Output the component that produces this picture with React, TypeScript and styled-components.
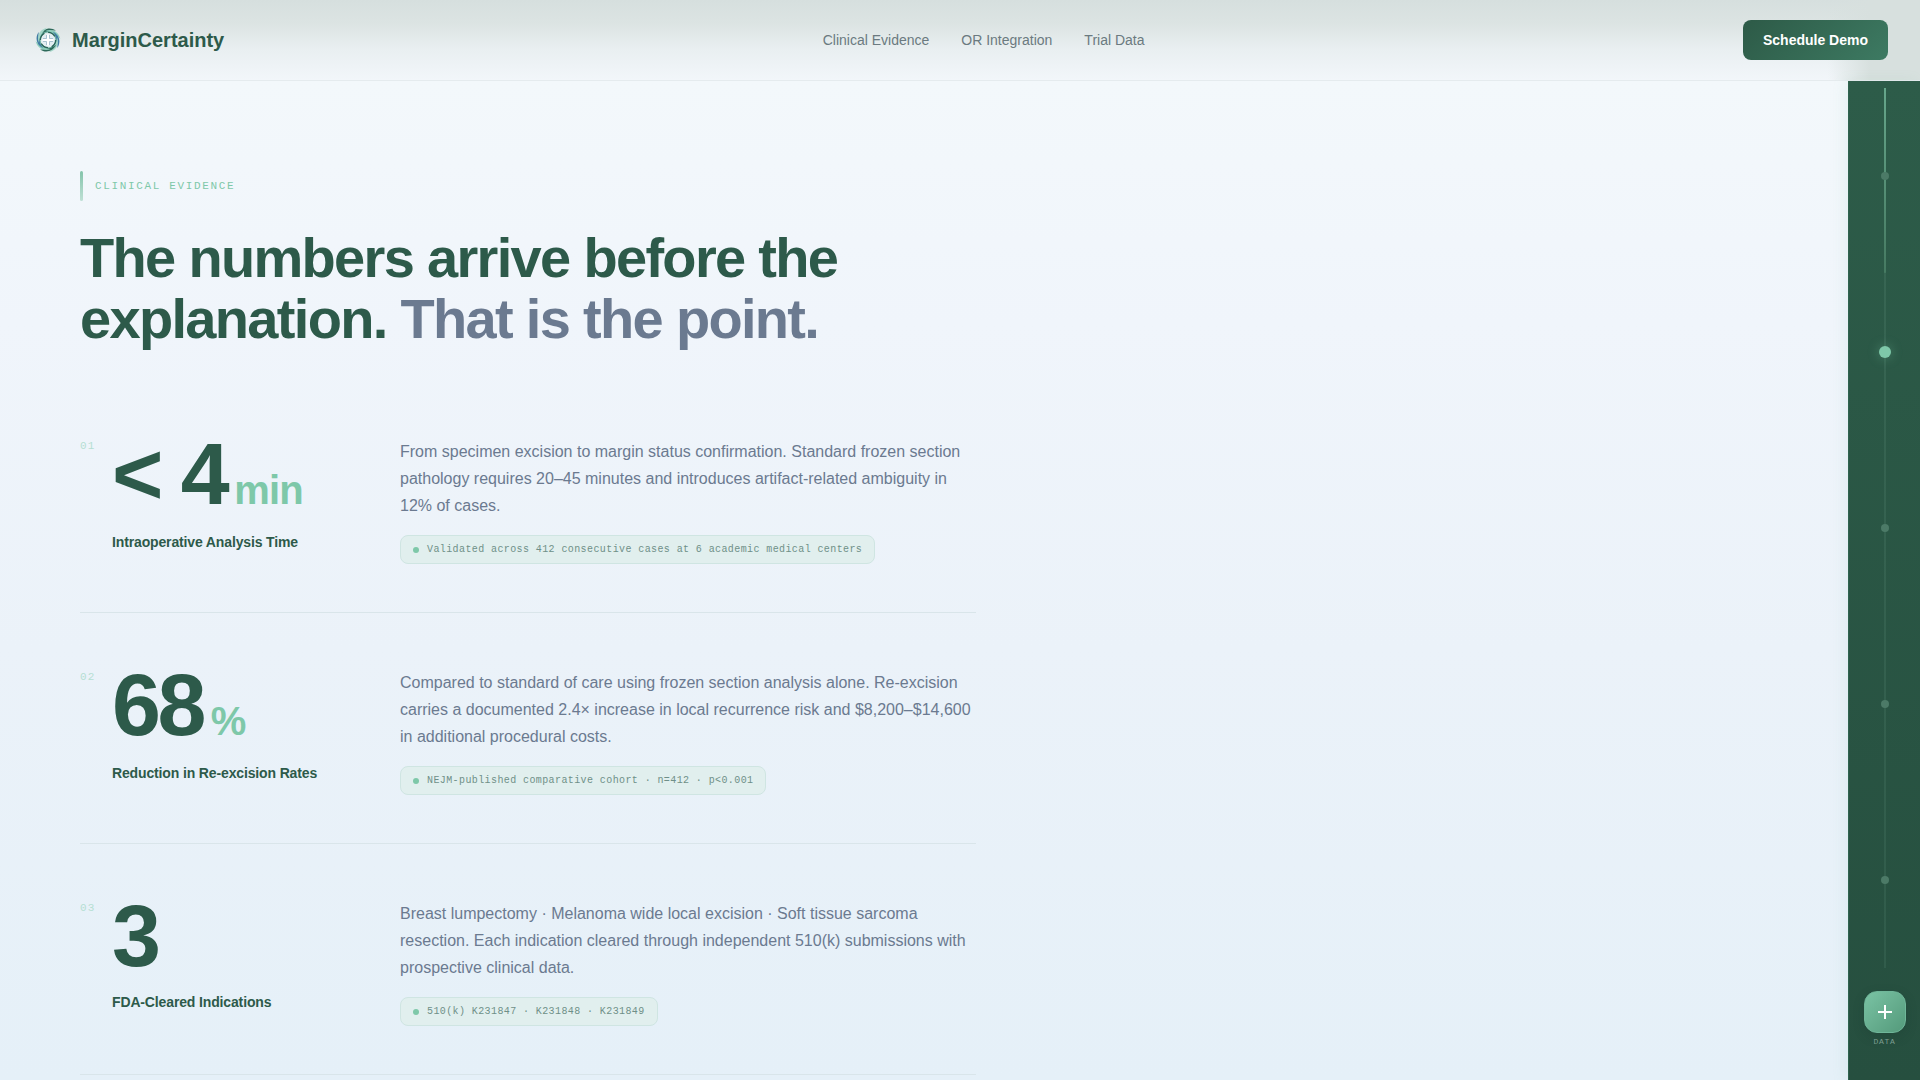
import React from "react";
import styled, { createGlobalStyle } from "styled-components";

const SANS = '"Liberation Sans", Arial, sans-serif';
const MONO = '"Liberation Mono", "Courier New", monospace';
const GREEN = "#2d5a4a";
const MINT = "#7ec8a9";
const SLATE = "#6b7a90";

const GlobalStyle = createGlobalStyle`
  *, *::before, *::after { box-sizing: border-box; }
  html, body, #root { height: 100%; }
  body {
    margin: 0;
    overflow: hidden;
    font-family: ${SANS};
    color: ${GREEN};
    background: #f0f5fb;
  }
  h1, h2, h3, p, ol { margin: 0; padding: 0; }
`;

const Page = styled.div`
  display: flex;
  flex-direction: column;
  height: 100vh;
  overflow: hidden;
  background: linear-gradient(180deg, #f4f9fb 0%, #f0f5fb 30%, #ebf2f9 60%, #e5f0f8 100%);
`;

const Header = styled.header`
  display: flex;
  flex: none;
  align-items: center;
  justify-content: space-between;
  padding: 20px 32px;
  border-bottom: 1px solid #e5ebee;
  background:
    linear-gradient(90deg, transparent calc(100% - 92px), #d7e0de calc(100% - 50px)),
    linear-gradient(180deg, #d6dfde 0%, #dce4e3 30%, #e9eff1 62%, #f2f6fa 100%);
`;

const Brand = styled.a`
  display: flex;
  align-items: center;
  gap: 8px;
  color: ${GREEN};
  font-size: 20px;
  font-weight: 700;
  text-decoration: none;
`;

const Nav = styled.nav`
  display: flex;
  gap: 32px;
`;

const NavLink = styled.a`
  color: #6b7a80;
  font-size: 14px;
  text-decoration: none;
`;

const DemoButton = styled.button`
  height: 40px;
  padding: 0 20px;
  border: 0;
  border-radius: 8px;
  background: linear-gradient(135deg, #2d5a47, #3d7a62);
  color: #fff;
  font: 700 14px ${SANS};
`;

const Body = styled.div`
  display: flex;
  flex: 1;
  min-height: 0;
`;

const Main = styled.main`
  flex: 1;
  min-width: 0;
  overflow: hidden;
  padding: 90px 80px 0;
`;

const Content = styled.div`
  max-width: 896px;
`;

const Eyebrow = styled.p`
  display: flex;
  align-items: center;
  gap: 12px;
  height: 30px;
  color: ${MINT};
  font: 11px ${MONO};
  letter-spacing: 0.15em;
  text-transform: uppercase;

  &::before {
    content: "";
    width: 3px;
    height: 100%;
    border-radius: 2px;
    background: linear-gradient(180deg, #84c4ab, #bfe0d5);
  }
`;

const Title = styled.h1`
  margin-top: 26px;
  font-size: 56px;
  font-weight: 700;
  line-height: 61px;
  letter-spacing: -0.03em;
`;

const Muted = styled.span`
  color: ${SLATE};
`;

const StatList = styled.ol`
  margin-top: 33px;
  list-style: none;
`;

const Stat = styled.li`
  display: grid;
  grid-template-columns: 32px 288px 1fr;
  padding: 48px 0;
  border-bottom: 1px solid #d9e5ea;
`;

const StatIndex = styled.span`
  padding-top: 9px;
  color: #b5dfd3;
  font: 11px/14px ${MONO};
  letter-spacing: 0.1em;
`;

const StatValue = styled.p`
  display: flex;
  align-items: baseline;
  gap: 8px;
  font-size: 88px;
  font-weight: 700;
  line-height: 88px;
  letter-spacing: -0.04em;
`;

const StatUnit = styled.span`
  color: ${MINT};
  font-size: 40px;
  line-height: 60px;
  letter-spacing: -0.02em;
`;

const StatLabel = styled.h2`
  margin-top: 12px;
  font-size: 14px;
  font-weight: 700;
  line-height: 20px;
  letter-spacing: -0.01em;
`;

const StatDetail = styled.div`
  padding-top: 8px;
`;

const StatText = styled.p`
  color: ${SLATE};
  font-size: 16px;
  line-height: 27px;
`;

const Source = styled.p`
  display: flex;
  align-items: center;
  gap: 8px;
  width: fit-content;
  height: 29px;
  margin-top: 16px;
  padding: 0 12px;
  border: 1px solid #cfe5e2;
  border-radius: 8px;
  background: #e1efee;
  color: #6f8f88;
  font: 10px ${MONO};
  letter-spacing: 0.04em;

  &::before {
    content: "";
    width: 6px;
    height: 6px;
    border-radius: 50%;
    background: ${MINT};
  }
`;

const Rail = styled.aside`
  display: flex;
  flex: none;
  flex-direction: column;
  align-items: center;
  width: 72px;
  padding: 7px 0 33px;
  border-left: 1px solid #2f6450;
  background: linear-gradient(180deg, #2d5c49, #264f3f);
  box-shadow: -4px 0 12px rgba(126, 200, 169, 0.1);
`;

const Track = styled.nav`
  display: flex;
  flex: 1;
  flex-direction: column;
  width: 12px;
  background:
    linear-gradient(180deg, #66a68b, #467a62) center top / 2px 21% no-repeat,
    linear-gradient(180deg, #396855, #315c4b) center / 2px 100% no-repeat;
`;

const Stop = styled.a<{ $active?: boolean }>`
  display: flex;
  flex: 1;
  align-items: center;
  justify-content: center;

  &::before {
    content: "";
    width: ${(p) => (p.$active ? 12 : 8)}px;
    height: ${(p) => (p.$active ? 12 : 8)}px;
    border-radius: 50%;
    background: ${(p) => (p.$active ? MINT : "#4c7a67")};
    box-shadow: ${(p) => (p.$active ? "0 0 12px rgba(126, 200, 169, 0.4)" : "none")};
  }
`;

const DataButton = styled.button`
  display: grid;
  place-items: center;
  width: 42px;
  height: 42px;
  margin-top: 23px;
  padding: 0;
  border: 1px solid #6fb699;
  border-radius: 13px;
  background: linear-gradient(135deg, #7ac3a4, #549a7b);
  box-shadow: 0 4px 12px rgba(20, 50, 38, 0.2);
  color: #fff;
`;

const DataLabel = styled.span`
  margin-top: 4px;
  color: #7c9d90;
  font: 8px/10px ${MONO};
  letter-spacing: 0.08em;
`;

const blades = [0, 45, 90, 135, 180, 225, 270, 315];
const bladeColors = ["#2d6a5a", "#8fcfbd", "#3f7ba3", "#a3d6c8"];

function Logo() {
  return (
    <svg width="32" height="32" viewBox="0 0 32 32" aria-hidden="true">
      <circle cx="16" cy="16" r="8.6" fill="none" stroke="#6fb3a4" strokeWidth="2.4" />
      {blades.map((angle, i) => (
        <path
          key={angle}
          d="M24 6.6 C19 3.2 11.5 3.6 7.6 11.4 C11.5 7.6 17.5 6.4 24 6.6 Z"
          fill={bladeColors[i % 4]}
          transform={`rotate(${angle} 16 16)`}
        />
      ))}
      <circle cx="16" cy="16" r="7.6" fill="none" stroke="#2a6358" strokeWidth="1.4" strokeDasharray="8 3.9" />
      <circle cx="16" cy="16" r="6.6" fill="#e3eef2" />
      <path
        d="M14.5 11v3.5H11M17.5 11v3.5H21M14.5 21v-3.5H11M17.5 21v-3.5H21"
        fill="none"
        stroke="#a9c2d0"
        strokeWidth="1"
      />
      <path d="M16 10.5v11M10.5 16h11" stroke="#fff" strokeWidth="2" />
    </svg>
  );
}

const stats = [
  {
    value: "< 4",
    unit: "min",
    label: "Intraoperative Analysis Time",
    text: "From specimen excision to margin status confirmation. Standard frozen section pathology requires 20–45 minutes and introduces artifact-related ambiguity in 12% of cases.",
    source: "Validated across 412 consecutive cases at 6 academic medical centers",
  },
  {
    value: "68",
    unit: "%",
    label: "Reduction in Re-excision Rates",
    text: "Compared to standard of care using frozen section analysis alone. Re-excision carries a documented 2.4× increase in local recurrence risk and $8,200–$14,600 in additional procedural costs.",
    source: "NEJM-published comparative cohort · n=412 · p<0.001",
  },
  {
    value: "3",
    unit: "",
    label: "FDA-Cleared Indications",
    text: "Breast lumpectomy · Melanoma wide local excision · Soft tissue sarcoma resection. Each indication cleared through independent 510(k) submissions with prospective clinical data.",
    source: "510(k) K231847 · K231848 · K231849",
  },
];

const sections = ["Overview", "Evidence", "Integration", "Trials", "Contact"];

export default function App() {
  return (
    <Page>
      <GlobalStyle />
      <Header>
        <Brand href="#top">
          <Logo />
          MarginCertainty
        </Brand>
        <Nav>
          <NavLink href="#evidence">Clinical Evidence</NavLink>
          <NavLink href="#integration">OR Integration</NavLink>
          <NavLink href="#trials">Trial Data</NavLink>
        </Nav>
        <DemoButton type="button">Schedule Demo</DemoButton>
      </Header>
      <Body>
        <Main>
          <Content>
            <Eyebrow>Clinical Evidence</Eyebrow>
            <Title>
              The numbers arrive before the explanation. <Muted>That is the point.</Muted>
            </Title>
            <StatList>
              {stats.map((s, i) => (
                <Stat key={s.label}>
                  <StatIndex>{`0${i + 1}`}</StatIndex>
                  <div>
                    <StatValue>
                      {s.value}
                      {s.unit && <StatUnit>{s.unit}</StatUnit>}
                    </StatValue>
                    <StatLabel>{s.label}</StatLabel>
                  </div>
                  <StatDetail>
                    <StatText>{s.text}</StatText>
                    <Source>{s.source}</Source>
                  </StatDetail>
                </Stat>
              ))}
            </StatList>
          </Content>
        </Main>
        <Rail>
          <Track aria-label="Sections">
            {sections.map((name) => (
              <Stop key={name} href={`#${name.toLowerCase()}`} aria-label={name} $active={name === "Evidence"} />
            ))}
          </Track>
          <DataButton type="button" aria-label="Data">
            <svg width="14" height="14" viewBox="0 0 14 14" aria-hidden="true">
              <path d="M7 0v14M0 7h14" stroke="currentColor" strokeWidth="2" />
            </svg>
          </DataButton>
          <DataLabel>DATA</DataLabel>
        </Rail>
      </Body>
    </Page>
  );
}
